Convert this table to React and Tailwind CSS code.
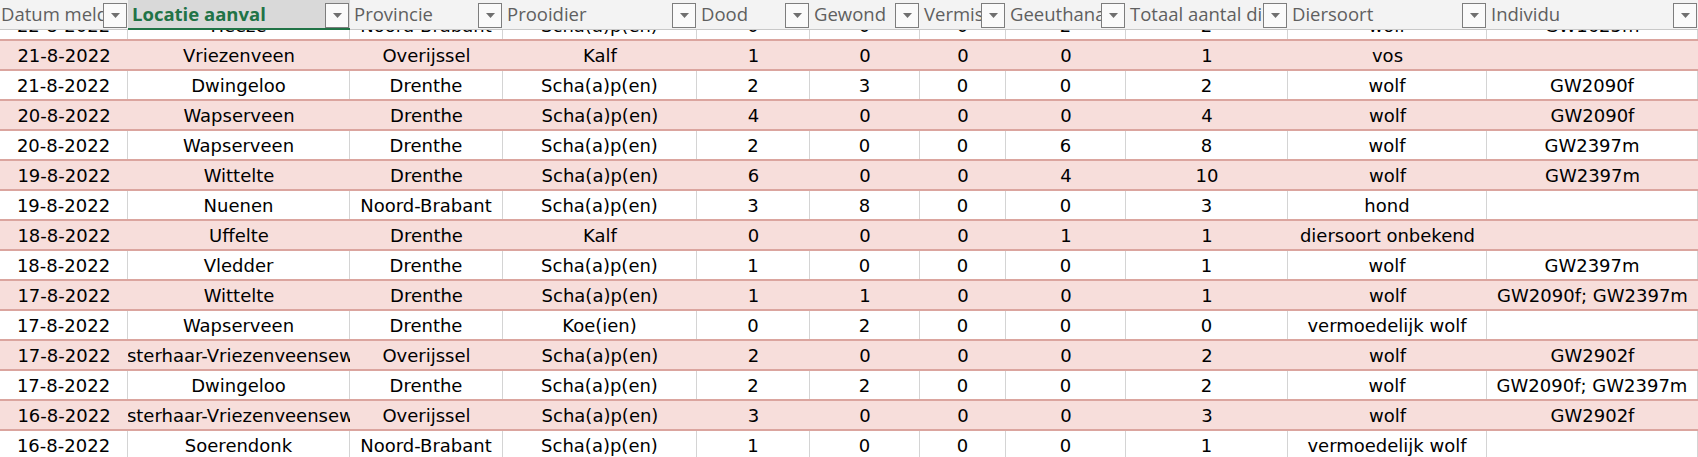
const COLUMNS = [
  ["Datum melding", 128],
  ["Locatie aanval", 222],
  ["Provincie", 153],
  ["Prooidier", 194],
  ["Dood", 113],
  ["Gewond", 110],
  ["Vermist", 86],
  ["Geeuthanaseerd", 120],
  ["Totaal aantal dieren", 162],
  ["Diersoort", 199],
  ["Individu", 211],
];

const ROWS = [
  ["22-8-2022", "Heeze", "Noord-Brabant", "Scha(a)p(en)", "0", "0", "0", "2", "2", "wolf", "GW1625m"],
  ["21-8-2022", "Vriezenveen", "Overijssel", "Kalf", "1", "0", "0", "0", "1", "vos", ""],
  ["21-8-2022", "Dwingeloo", "Drenthe", "Scha(a)p(en)", "2", "3", "0", "0", "2", "wolf", "GW2090f"],
  ["20-8-2022", "Wapserveen", "Drenthe", "Scha(a)p(en)", "4", "0", "0", "0", "4", "wolf", "GW2090f"],
  ["20-8-2022", "Wapserveen", "Drenthe", "Scha(a)p(en)", "2", "0", "0", "6", "8", "wolf", "GW2397m"],
  ["19-8-2022", "Wittelte", "Drenthe", "Scha(a)p(en)", "6", "0", "0", "4", "10", "wolf", "GW2397m"],
  ["19-8-2022", "Nuenen", "Noord-Brabant", "Scha(a)p(en)", "3", "8", "0", "0", "3", "hond", ""],
  ["18-8-2022", "Uffelte", "Drenthe", "Kalf", "0", "0", "0", "1", "1", "diersoort onbekend", ""],
  ["18-8-2022", "Vledder", "Drenthe", "Scha(a)p(en)", "1", "0", "0", "0", "1", "wolf", "GW2397m"],
  ["17-8-2022", "Wittelte", "Drenthe", "Scha(a)p(en)", "1", "1", "0", "0", "1", "wolf", "GW2090f; GW2397m"],
  ["17-8-2022", "Wapserveen", "Drenthe", "Koe(ien)", "0", "2", "0", "0", "0", "vermoedelijk wolf", ""],
  ["17-8-2022", "Oosterhaar-Vriezenveenseweg", "Overijssel", "Scha(a)p(en)", "2", "0", "0", "0", "2", "wolf", "GW2902f"],
  ["17-8-2022", "Dwingeloo", "Drenthe", "Scha(a)p(en)", "2", "2", "0", "0", "2", "wolf", "GW2090f; GW2397m"],
  ["16-8-2022", "Oosterhaar-Vriezenveenseweg", "Overijssel", "Scha(a)p(en)", "3", "0", "0", "0", "3", "wolf", "GW2902f"],
  ["16-8-2022", "Soerendonk", "Noord-Brabant", "Scha(a)p(en)", "1", "0", "0", "0", "1", "vermoedelijk wolf", ""],
];

export default function App() {
  return (
    <div className="h-[457px] w-[1698px] overflow-hidden bg-white">
      {/* header row with filter buttons */}
      <div className="flex h-[30px] border-b border-[#c8c8c8] bg-[#f3f3f3] font-['Open_Sans',sans-serif] text-[18.5px] text-[#5f5f5f]">
        {COLUMNS.map(([title, width], i) => (
          <HeaderCell key={title} title={title} width={width} index={i} />
        ))}
      </div>

      {/* data rows */}
      <div className="h-[427px] overflow-hidden font-['DejaVu_Sans',sans-serif] text-[18px] text-black">
        {ROWS.map((row, r) => (
          <DataRow key={r} row={row} pink={r % 2 === 1} first={r === 0} />
        ))}
      </div>
    </div>
  );
}

function HeaderCell({ title, width, index }) {
  const selected = index === 1;
  return (
    <div
      className={`relative flex h-[29px] shrink-0 items-start ${selected ? "bg-[#d9d9d9]" : ""}`}
      style={{ width }}
    >
      <span
        className={`min-w-0 flex-1 overflow-hidden whitespace-nowrap pt-[1px] leading-[26px] ${index === 0 ? "pl-[1px]" : "pl-[4px]"} ${selected ? "font-bold text-[#217346]" : ""}`}
      >
        {title}
      </span>
      <div className="mr-[1px] mt-[3px] flex h-[25px] w-[24px] shrink-0 items-center justify-center border-[1.5px] border-[#7d7d7d] bg-[#fafafa]">
        <svg width="9" height="5" viewBox="0 0 9 5">
          <path d="M0 0h9L4.5 5z" fill="#6f6f6f" />
        </svg>
      </div>
      {selected && (
        <div className="absolute bottom-[-1px] left-0 h-[2px] w-full bg-[#217346]" />
      )}
    </div>
  );
}

function DataRow({ row, pink, first }) {
  return (
    <div
      className={`flex ${pink ? "h-[32px] border-y-2 border-[#dba59f] bg-[#f7dedb]" : "h-[28px]"} ${first ? "-mt-[19px]" : ""}`}
    >
      {row.map((v, i) => (
        <div
          key={i}
          className={`flex shrink-0 items-center justify-center overflow-hidden whitespace-nowrap ${pink ? "" : "border-r border-[#d4d4d4]"}`}
          style={{ width: COLUMNS[i][1] }}
        >
          {v}
        </div>
      ))}
    </div>
  );
}
